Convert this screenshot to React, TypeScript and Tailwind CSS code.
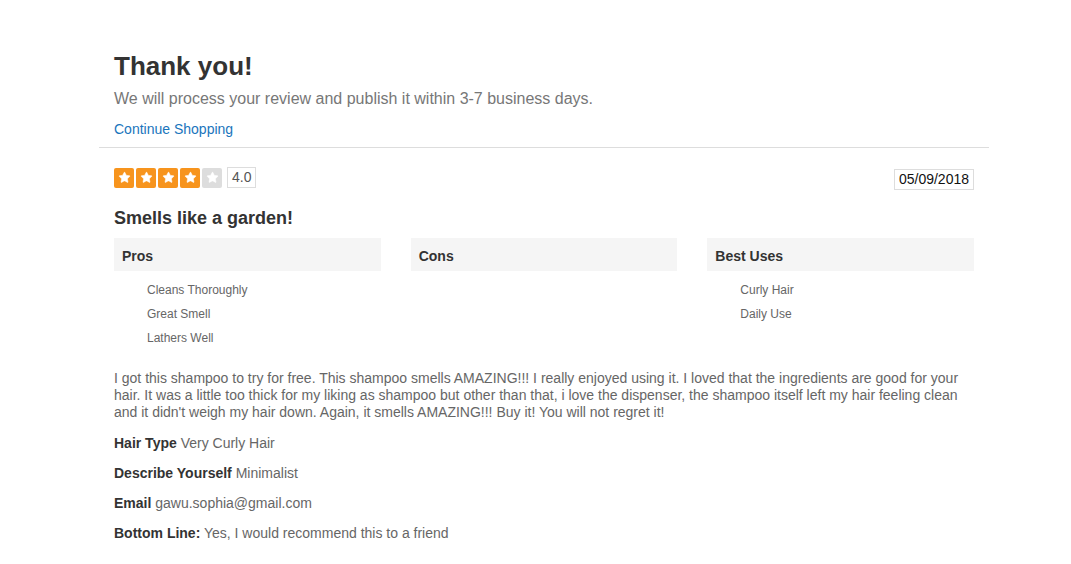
import { Star } from 'lucide-react';

const pros = ['Cleans Thoroughly', 'Great Smell', 'Lathers Well'];
const bestUses = ['Curly Hair', 'Daily Use'];

function Stars({ value }: { value: number }) {
  return (
    <div className="flex gap-[2px]">
      {[1, 2, 3, 4, 5].map((i) => (
        <div
          key={i}
          className={`w-[20px] h-[20px] flex items-center justify-center rounded-[2px] ${
            i <= value ? 'bg-[#f7941d]' : 'bg-[#dddddd]'
          }`}
        >
          <Star className="w-[13px] h-[13px] text-white fill-white" strokeWidth={1} />
        </div>
      ))}
    </div>
  );
}

function Column({ title, items }: { title: string; items: string[] }) {
  return (
    <div className="flex-1">
      <div className="bg-[#f5f5f5] h-[33px] flex items-center pt-[3px] px-[8px] text-[14px] font-bold text-[#333]">
        {title}
      </div>
      <ul className="mt-[7px] pl-[33px] text-[12px] text-[#666]">
        {items.map((it) => (
          <li key={it} className="leading-[24px]">
            {it}
          </li>
        ))}
      </ul>
    </div>
  );
}

export default function App() {
  return (
    <div className="min-h-screen bg-white font-['Liberation_Sans',Arial,sans-serif] text-[#333]">
      <div className="ml-[99px] w-[890px] pt-[50px]">
        {/* Thank you header */}
        <div className="px-[15px]">
          <h1 className="text-[26px] font-bold leading-[32px] text-[#333]">Thank you!</h1>
          <p className="mt-[6px] text-[16px] leading-[22px] text-[#777]">
            We will process your review and publish it within 3-7 business days.
          </p>
          <a href="#" className="block mt-[10px] text-[14px] leading-[18px] text-[#1a75bc]">
            Continue Shopping
          </a>
        </div>
        <hr className="mt-[9px] border-t border-[#dddddd]" />

        {/* Review */}
        <div className="px-[15px] pt-[19px]">
          <div className="flex justify-between items-start">
            <div className="flex items-center gap-[5px]">
              <Stars value={4} />
              <span className="border border-[#dddddd] h-[21px] px-[4px] flex items-center text-[14px] text-[#555]">
                4.0
              </span>
            </div>
            <span className="mt-[2px] border border-[#dddddd] h-[21px] px-[4px] flex items-center text-[14px] text-[#111]">
              05/09/2018
            </span>
          </div>

          <h2 className="mt-[16px] text-[18px] font-bold leading-[24px] text-[#333]">Smells like a garden!</h2>

          <div className="mt-[8px] flex gap-[30px]">
            <Column title="Pros" items={pros} />
            <Column title="Cons" items={[]} />
            <Column title="Best Uses" items={bestUses} />
          </div>

          <p className="mt-[20px] text-[14px] leading-[17px] text-[#666]">
            I got this shampoo to try for free. This shampoo smells AMAZING!!! I really enjoyed using it. I loved that the
            ingredients are good for your hair. It was a little too thick for my liking as shampoo but other than that, i
            love the dispenser, the shampoo itself left my hair feeling clean and it didn't weigh my hair down. Again, it
            smells AMAZING!!! Buy it! You will not regret it!
          </p>

          <div className="mt-[14px] flex flex-col gap-[13px] text-[14px] leading-[17px] text-[#666]">
            <p>
              <span className="font-bold text-[#333]">Hair Type</span> Very Curly Hair
            </p>
            <p>
              <span className="font-bold text-[#333]">Describe Yourself</span> Minimalist
            </p>
            <p>
              <span className="font-bold text-[#333]">Email</span> gawu.sophia@gmail.com
            </p>
            <p>
              <span className="font-bold text-[#333]">Bottom Line:</span> Yes, I would recommend this to a friend
            </p>
          </div>
        </div>
      </div>
    </div>
  );
}
